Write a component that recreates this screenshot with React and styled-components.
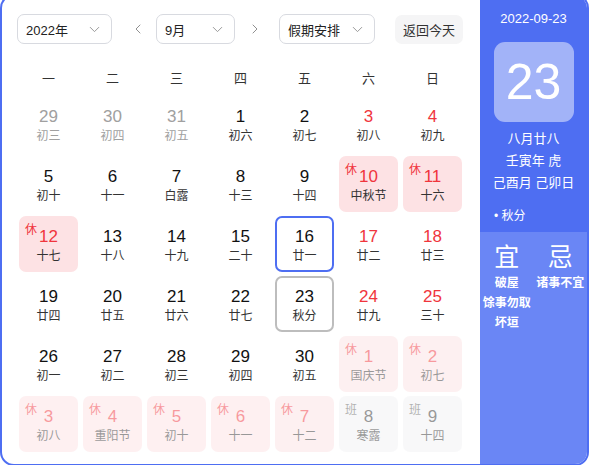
import React from "react";
import styled, { createGlobalStyle } from "styled-components";
import { ChevronDown, ChevronLeft, ChevronRight } from "lucide-react";

const GlobalStyle = createGlobalStyle`
  body {
    margin: 0;
    font-family: "Liberation Sans", "Noto Sans CJK SC", sans-serif;
    background: #fff;
    overflow: hidden;
  }
`;

const weekdays = ["一", "二", "三", "四", "五", "六", "日"];

// kind: other | red | rest | restFaded | workFaded | selected | today
const days = [
  [29, "初三", "other"], [30, "初四", "other"], [31, "初五", "other"], [1, "初六"], [2, "初七"], [3, "初八", "red"], [4, "初九", "red"],
  [5, "初十"], [6, "十一"], [7, "白露"], [8, "十三"], [9, "十四"], [10, "中秋节", "rest"], [11, "十六", "rest"],
  [12, "十七", "rest"], [13, "十八"], [14, "十九"], [15, "二十"], [16, "廿一", "selected"], [17, "廿二", "red"], [18, "廿三", "red"],
  [19, "廿四"], [20, "廿五"], [21, "廿六"], [22, "廿七"], [23, "秋分", "today"], [24, "廿九", "red"], [25, "三十", "red"],
  [26, "初一"], [27, "初二"], [28, "初三"], [29, "初四"], [30, "初五"], [1, "国庆节", "restFaded"], [2, "初七", "restFaded"],
  [3, "初八", "restFaded"], [4, "重阳节", "restFaded"], [5, "初十", "restFaded"], [6, "十一", "restFaded"], [7, "十二", "restFaded"], [8, "寒露", "workFaded"], [9, "十四", "workFaded"],
];

const App = () => {
  return (
    <>
      <GlobalStyle />
      <Frame>
        <Main>
          <Toolbar>
            <Select $w={95}>
              <span>2022年</span>
              <ChevronDown size={17} strokeWidth={1.4} color="#999" />
            </Select>
            <ArrowBtn $ml={18}>
              <ChevronLeft size={20} strokeWidth={1.4} />
            </ArrowBtn>
            <Select $w={79} $ml={10}>
              <span>9月</span>
              <ChevronDown size={17} strokeWidth={1.4} color="#999" />
            </Select>
            <ArrowBtn $ml={12}>
              <ChevronRight size={20} strokeWidth={1.4} />
            </ArrowBtn>
            <Select $w={96} $ml={16}>
              <span>假期安排</span>
              <ChevronDown size={17} strokeWidth={1.4} color="#999" />
            </Select>
            <TodayButton>返回今天</TodayButton>
          </Toolbar>
          <WeekRow>
            {weekdays.map((w) => (
              <WeekDay key={w}>{w}</WeekDay>
            ))}
          </WeekRow>
          <Grid>
            {days.map(([num, lunar, kind], i) => (
              <Cell key={i} $kind={kind}>
                {(kind === "rest" || kind === "restFaded") && <Tag>休</Tag>}
                {kind === "workFaded" && <Tag $work>班</Tag>}
                <DayNum $kind={kind}>{num}</DayNum>
                <Lunar $kind={kind}>{lunar}</Lunar>
              </Cell>
            ))}
          </Grid>
        </Main>
        <Side>
          <SideTop>
            <DateText>2022-09-23</DateText>
            <BigDay>23</BigDay>
            <InfoLine $mt={7}>八月廿八</InfoLine>
            <InfoLine>壬寅年 虎</InfoLine>
            <InfoLine>己酉月 己卯日</InfoLine>
            <Term>• 秋分</Term>
          </SideTop>
          <SideBottom>
            <YiJi>
              <YiJiTitle>宜</YiJiTitle>
              <YiJiItem>破屋</YiJiItem>
              <YiJiItem>馀事勿取</YiJiItem>
              <YiJiItem>坏垣</YiJiItem>
            </YiJi>
            <YiJi>
              <YiJiTitle>忌</YiJiTitle>
              <YiJiItem>诸事不宜</YiJiItem>
            </YiJi>
          </SideBottom>
        </Side>
      </Frame>
    </>
  );
};

const Frame = styled.div`
  width: 589px;
  height: 472px;
  margin-top: -6px;
  box-sizing: border-box;
  border: 2px solid #4e6ef2;
  border-radius: 14px;
  display: flex;
  overflow: hidden;
  background: #fff;
`;

const Main = styled.div`
  flex: 1;
  padding: 18px 0 0 15px;
`;

const Toolbar = styled.div`
  display: flex;
  align-items: center;
  height: 30px;
`;

const Select = styled.div`
  box-sizing: border-box;
  width: ${(p) => p.$w}px;
  height: 30px;
  margin-left: ${(p) => p.$ml || 0}px;
  border: 1px solid #d8dae0;
  border-radius: 7px;
  display: flex;
  align-items: center;
  justify-content: space-between;
  padding: 0 8px 0 8px;
  font-size: 13px;
  color: #222;
`;

const ArrowBtn = styled.div`
  width: 16px;
  margin-left: ${(p) => p.$ml}px;
  display: flex;
  justify-content: center;
  color: #888;
`;

const TodayButton = styled.div`
  margin-left: 20px;
  width: 68px;
  height: 29px;
  border-radius: 7px;
  background: #f5f5f6;
  display: flex;
  align-items: center;
  justify-content: center;
  font-size: 13px;
  color: #333;
`;

const WeekRow = styled.div`
  display: grid;
  grid-template-columns: repeat(7, 59px);
  column-gap: 5px;
  margin: 20px 0 6px 2px;
  height: 26px;
  align-items: center;
`;

const WeekDay = styled.div`
  text-align: center;
  font-size: 13px;
  color: #333;
`;

const Grid = styled.div`
  display: grid;
  grid-template-columns: repeat(7, 59px);
  grid-auto-rows: 56px;
  column-gap: 5px;
  row-gap: 4px;
  margin-left: 2px;
`;

const cellBg = {
  rest: "#fde2e4",
  restFaded: "#fde2e4",
  workFaded: "#f3f3f5",
};

const Cell = styled.div`
  position: relative;
  box-sizing: border-box;
  border-radius: 7px;
  display: flex;
  flex-direction: column;
  align-items: center;
  justify-content: center;
  padding-top: 2px;
  background: ${(p) => cellBg[p.$kind] || "transparent"};
  opacity: ${(p) => (p.$kind === "restFaded" || p.$kind === "workFaded" ? 0.5 : 1)};
  border: ${(p) =>
    p.$kind === "selected"
      ? "2px solid #4e6ef2"
      : p.$kind === "today"
      ? "2px solid #bdbdbd"
      : "none"};
`;

const Tag = styled.span`
  position: absolute;
  top: 4px;
  left: 6px;
  font-size: 12px;
  color: ${(p) => (p.$work ? "#666" : "#f0353d")};
`;

const numColor = (k) => {
  if (k === "other") return "#a0a0a0";
  if (k === "red" || k === "rest" || k === "restFaded") return "#f0353d";
  if (k === "workFaded") return "#333";
  return "#111";
};

const DayNum = styled.div`
  font-size: 17px;
  line-height: 21px;
  color: ${(p) => numColor(p.$kind)};
`;

const Lunar = styled.div`
  font-size: 12px;
  line-height: 18px;
  color: ${(p) => (p.$kind === "other" ? "#a0a0a0" : "#333")};
`;

const Side = styled.div`
  width: 107px;
  display: flex;
  flex-direction: column;
  color: #fff;
`;

const SideTop = styled.div`
  height: 236px;
  background: #4e6ef2;
  display: flex;
  flex-direction: column;
  align-items: center;
`;

const DateText = styled.div`
  margin-top: 15px;
  font-size: 13px;
  line-height: 16px;
`;

const BigDay = styled.div`
  margin-top: 15px;
  width: 80px;
  height: 80px;
  border-radius: 11px;
  background: rgba(255, 255, 255, 0.48);
  display: flex;
  align-items: center;
  justify-content: center;
  font-size: 50px;
  font-family: "Liberation Sans", sans-serif;
`;

const InfoLine = styled.div`
  margin-top: ${(p) => p.$mt || 3}px;
  font-size: 13px;
  line-height: 19px;
`;

const Term = styled.div`
  align-self: flex-start;
  margin: 14px 0 0 14px;
  font-size: 12px;
`;

const SideBottom = styled.div`
  flex: 1;
  background: #6a86f5;
  display: grid;
  grid-template-columns: 1fr 1fr;
  padding-top: 10px;
`;

const YiJi = styled.div`
  display: flex;
  flex-direction: column;
  align-items: center;
`;

const YiJiTitle = styled.div`
  font-size: 25px;
  line-height: 30px;
  margin-bottom: 1px;
`;

const YiJiItem = styled.div`
  font-size: 12px;
  font-weight: bold;
  line-height: 20px;
  white-space: nowrap;
`;

export default App;
